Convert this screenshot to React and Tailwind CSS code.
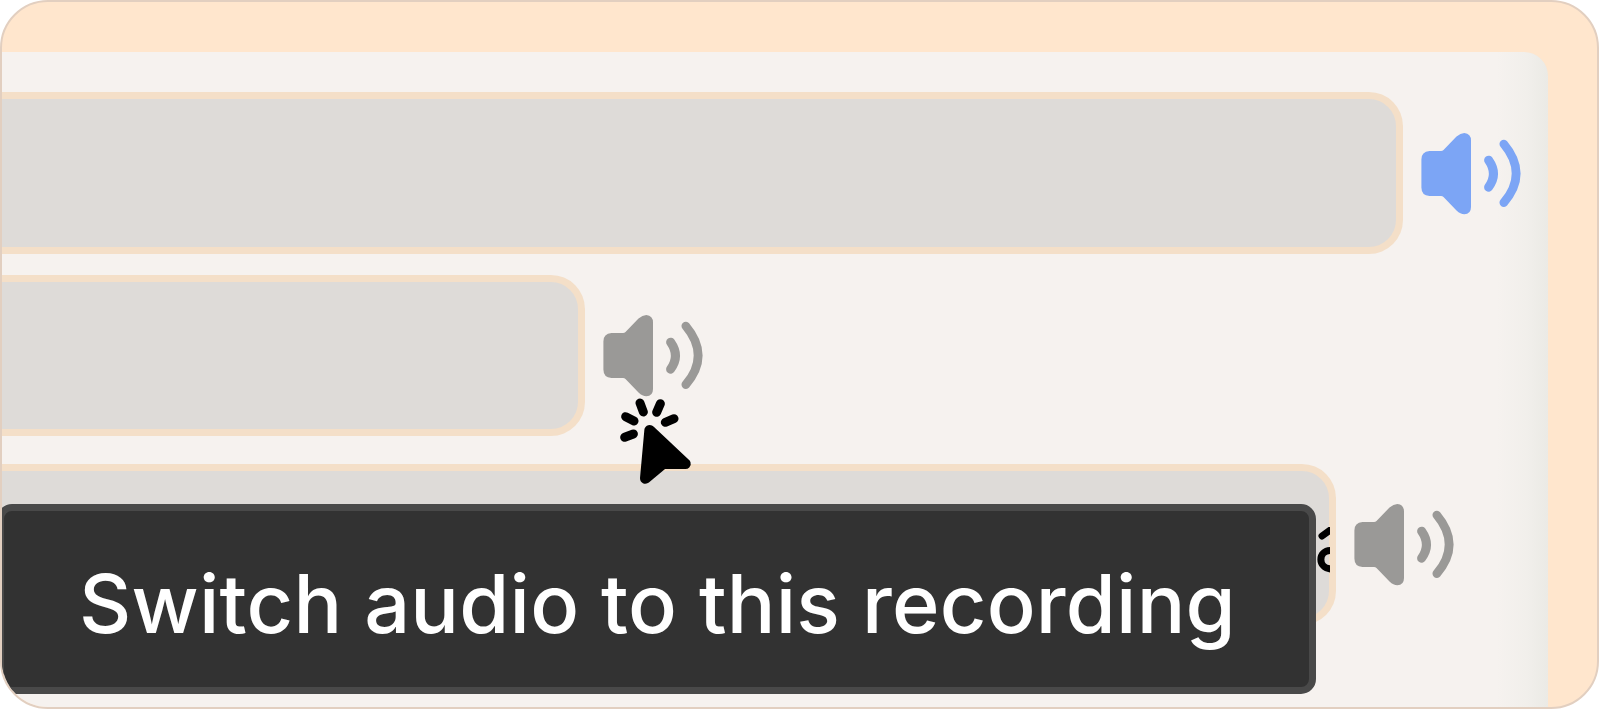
function SpeakerIcon({ className }) {
  return (
    <svg viewBox="0 0 100 84" className={`mt-[1.500px] h-[84px] w-[100px] shrink-0 ${className}`} fill="none">
      <path
        fill="currentColor"
        d="M8.500 19H20Q21.500 19 22.500 18L35.500 4.500Q39.500 .9 43.300 .9Q50 1.500 50 8.500V75Q50 82 43.300 82.300Q39.500 82.300 35.500 78.500L22.500 65Q21.500 64 20 64H8.500Q.4 63.500 .4 55.500V27.500Q.4 19.500 8.500 19Z"
      />
      <path d="M67.600 28.200Q77.300 42 67.600 55.200" stroke="currentColor" strokeWidth="9" strokeLinecap="round" />
      <path d="M82.800 12Q107.500 41.500 82.800 70.600" stroke="currentColor" strokeWidth="8.600" strokeLinecap="round" />
    </svg>
  );
}

function ClickCursor() {
  return (
    <svg viewBox="236 412 224 268" className="absolute top-[395.400px] left-[616.700px] h-[89.3px] w-[74.7px]">
      <path
        d="M330 512L436 612Q437 613 435 613L369 613L316 657Q314 658 314 656L327 512Q328 510 330 512Z"
        stroke="black"
        strokeWidth="30"
        strokeLinejoin="round"
      />
      <path
        d="M299 430L309 457M360 432L349 458M256 471L281 484M401 477L375 488M253 533L279 523"
        stroke="black"
        strokeWidth="27"
        strokeLinecap="round"
      />
    </svg>
  );
}

function Track({ barClass, iconClass }) {
  return (
    <div className="flex h-[161.500px] items-center gap-[18px]">
      <div className={`h-full shrink-0 rounded-r-[34px] border-y-[7px] border-r-[7px] border-[#f4dfc8] bg-[#dedbd8] ${barClass}`} />
      <SpeakerIcon className={iconClass} />
    </div>
  );
}

export default function App() {
  return (
    <div className="h-[710px] w-[1600px] overflow-hidden bg-white">
      <main className="relative h-[709px] w-[1599px] overflow-hidden rounded-[48px] border-2 border-[#e2cfc0] bg-[#ffe6cd]">
        <section className="mt-[50px] flex h-[655px] w-[1546px] flex-col rounded-tr-[24px] bg-[#f6f2ef] bg-[linear-gradient(to_right,#f6f2ef_1495px,#f1efeb_1525px,#ebeae5_1546px)] pt-[40px]">
          <Track barClass="w-[1401px]" iconClass="text-[#7ca5f5]" />
          <div className="h-[21px]" />
          <Track barClass="w-[583.300px]" iconClass="text-[#9a9997]" />
          <div className="h-[27.700px]" />
          <Track barClass="w-[1333.500px]" iconClass="text-[#9a9997]" />
        </section>
        <svg viewBox="0 0 14 50" className="absolute top-[525px] left-[1313.500px] h-[50px] w-[14px]" fill="none" stroke="black">
          <path d="M6 9L15 2.500" strokeWidth="7" strokeLinecap="round" />
          <path d="M15 23.500C1.500 23.500 1.500 41 15 42" strokeWidth="7" />
        </svg>
        <div className="absolute top-[502px] -left-[5px] flex h-[190px] w-[1318.700px] items-center rounded-[15px] border-[7px] border-[#494949] bg-[#323232] pt-[10px] pl-[75px]">
          <span className="font-['Inter',sans-serif] text-[81px] leading-none font-medium tracking-[0.2px] whitespace-nowrap text-white">
            Switch audio to this recording
          </span>
        </div>
        <ClickCursor />
      </main>
    </div>
  );
}
